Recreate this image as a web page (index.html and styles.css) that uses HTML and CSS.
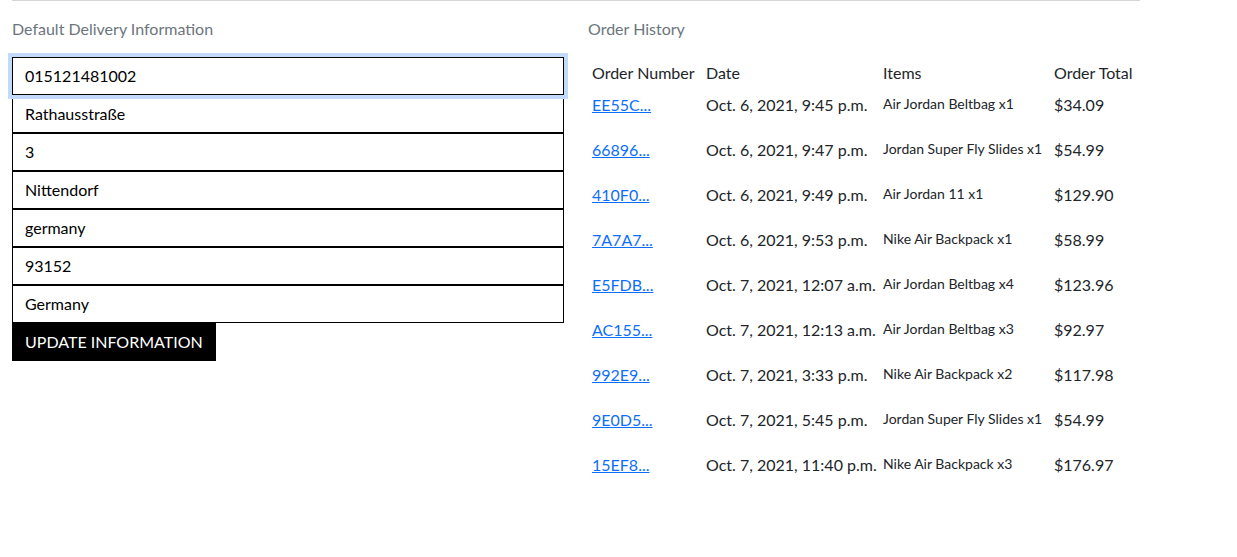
FILE: index.html
```html
<!DOCTYPE html>
<html>
<head>
<meta charset="utf-8">
<title>Profile</title>
<link rel="stylesheet" href="styles.css">
</head>
<body>
<div class="container">
  <div class="topline"></div>
  <div class="row">
    <section class="col">
      <h2 class="section-title">Default Delivery Information</h2>
      <form class="delivery-form">
        <input class="field focused" type="text" value="015121481002">
        <input class="field" type="text" value="Rathausstraße">
        <input class="field" type="text" value="3">
        <input class="field" type="text" value="Nittendorf">
        <input class="field" type="text" value="germany">
        <input class="field" type="text" value="93152">
        <input class="field" type="text" value="Germany">
        <button class="btn-update" type="button">UPDATE INFORMATION</button>
      </form>
    </section>
    <section class="col">
      <h2 class="section-title">Order History</h2>
      <table class="orders">
        <colgroup>
          <col class="c-num"><col class="c-date"><col class="c-items"><col class="c-total">
        </colgroup>
        <thead>
          <tr><th>Order Number</th><th>Date</th><th>Items</th><th>Order Total</th></tr>
        </thead>
        <tbody>
          <tr><td><a href="#">EE55C...</a></td><td>Oct. 6, 2021, 9:45 p.m.</td><td><p class="item">Air Jordan Beltbag x1</p></td><td>$34.09</td></tr>
          <tr><td><a href="#">66896...</a></td><td>Oct. 6, 2021, 9:47 p.m.</td><td><p class="item">Jordan Super Fly Slides x1</p></td><td>$54.99</td></tr>
          <tr><td><a href="#">410F0...</a></td><td>Oct. 6, 2021, 9:49 p.m.</td><td><p class="item">Air Jordan 11 x1</p></td><td>$129.90</td></tr>
          <tr><td><a href="#">7A7A7...</a></td><td>Oct. 6, 2021, 9:53 p.m.</td><td><p class="item">Nike Air Backpack x1</p></td><td>$58.99</td></tr>
          <tr><td><a href="#">E5FDB...</a></td><td>Oct. 7, 2021, 12:07 a.m.</td><td><p class="item">Air Jordan Beltbag x4</p></td><td>$123.96</td></tr>
          <tr><td><a href="#">AC155...</a></td><td>Oct. 7, 2021, 12:13 a.m.</td><td><p class="item">Air Jordan Beltbag x3</p></td><td>$92.97</td></tr>
          <tr><td><a href="#">992E9...</a></td><td>Oct. 7, 2021, 3:33 p.m.</td><td><p class="item">Nike Air Backpack x2</p></td><td>$117.98</td></tr>
          <tr><td><a href="#">9E0D5...</a></td><td>Oct. 7, 2021, 5:45 p.m.</td><td><p class="item">Jordan Super Fly Slides x1</p></td><td>$54.99</td></tr>
          <tr><td><a href="#">15EF8...</a></td><td>Oct. 7, 2021, 11:40 p.m.</td><td><p class="item">Nike Air Backpack x3</p></td><td>$176.97</td></tr>
        </tbody>
      </table>
    </section>
  </div>
</div>
</body>
</html>
```

FILE: styles.css
```css
* { box-sizing: border-box; }
html, body {
  margin: 0;
  padding: 0;
  background: #fff;
}
body {
  font-family: Lato, "Open Sans", sans-serif;
  font-size: 16px;
  line-height: 1.5;
  color: #212529;
}
.container {
  width: 1152px;
  padding: 0 12px;
}
.topline {
  height: 1px;
  background: #d6d6d6;
}
.row {
  display: flex;
  gap: 24px;
}
.col {
  flex: 0 0 552px;
  width: 552px;
}
.section-title {
  font-size: 16px;
  font-weight: 400;
  color: #6c757d;
  line-height: 24px;
  margin: 16px 0 16px 0;
}
.delivery-form {
  display: flex;
  flex-direction: column;
  align-items: flex-start;
}
.field {
  display: block;
  width: 100%;
  height: 38px;
  margin: 0;
  padding: 0 12px 2px 12px;
  border: 1px solid #000;
  border-radius: 0;
  font-family: Lato, "Open Sans", sans-serif;
  font-size: 16px;
  color: #000;
  background: #fff;
  outline: none;
}
.field.focused {
  box-shadow: 0 0 0 4px #c2dafc;
  position: relative;
}
.btn-update {
  height: 38px;
  padding: 0 13px;
  border: 0;
  border-radius: 0;
  background: #000;
  color: #fff;
  font-family: Lato, "Open Sans", sans-serif;
  font-size: 16px;
  line-height: 38px;
  cursor: pointer;
}
.orders {
  width: 552px;
  border-collapse: collapse;
  table-layout: fixed;
  vertical-align: top;
}
.c-num { width: 114px; }
.c-date { width: 177px; }
.c-items { width: 171px; }
.c-total { width: 90px; }
.orders th,
.orders td {
  padding: 4px;
  text-align: left;
  font-weight: 400;
  vertical-align: top;
  white-space: nowrap;
}
.orders a {
  color: #0d6efd;
  text-decoration: underline;
}
.item {
  margin: 0 0 16px 0;
  font-size: 14px;
  line-height: 21px;
}
```
